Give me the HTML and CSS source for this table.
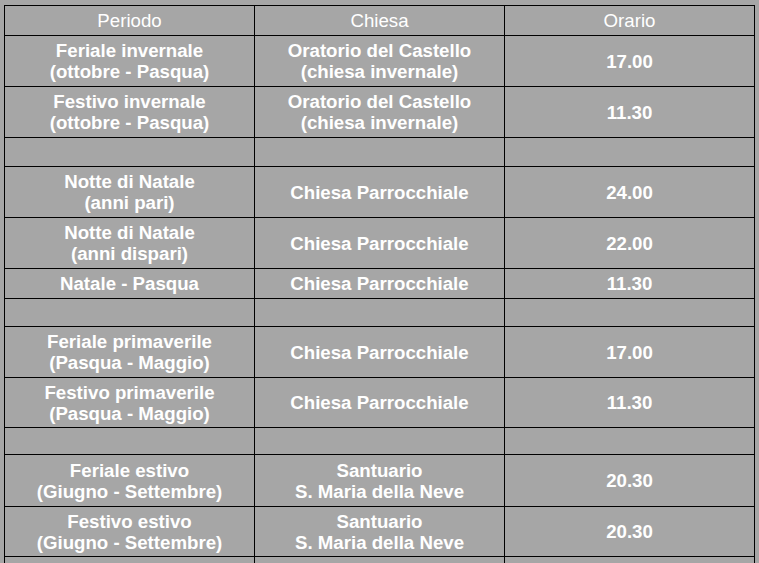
FILE: index.html
```html
<!DOCTYPE html>
<html lang="it">
<head>
<meta charset="utf-8">
<title>Orari Messe</title>
<link rel="stylesheet" href="styles.css">
</head>
<body>
<table class="orari">
  <tr class="head r30"><td>Periodo</td><td>Chiesa</td><td>Orario</td></tr>
  <tr class="r51"><td>Feriale invernale<br>(ottobre - Pasqua)</td><td>Oratorio del Castello<br>(chiesa invernale)</td><td>17.00</td></tr>
  <tr class="r51"><td>Festivo invernale<br>(ottobre - Pasqua)</td><td>Oratorio del Castello<br>(chiesa invernale)</td><td>11.30</td></tr>
  <tr class="r29"><td></td><td></td><td></td></tr>
  <tr class="r51"><td>Notte di Natale<br>(anni pari)</td><td>Chiesa Parrocchiale</td><td>24.00</td></tr>
  <tr class="r51"><td>Notte di Natale<br>(anni dispari)</td><td>Chiesa Parrocchiale</td><td>22.00</td></tr>
  <tr class="r30"><td>Natale - Pasqua</td><td>Chiesa Parrocchiale</td><td>11.30</td></tr>
  <tr class="r28"><td></td><td></td><td></td></tr>
  <tr class="r51"><td>Feriale primaverile<br>(Pasqua - Maggio)</td><td>Chiesa Parrocchiale</td><td>17.00</td></tr>
  <tr class="r50"><td>Festivo primaverile<br>(Pasqua - Maggio)</td><td>Chiesa Parrocchiale</td><td>11.30</td></tr>
  <tr class="r27"><td></td><td></td><td></td></tr>
  <tr class="r52"><td>Feriale estivo<br>(Giugno - Settembre)</td><td>Santuario<br>S. Maria della Neve</td><td>20.30</td></tr>
  <tr class="r50"><td>Festivo estivo<br>(Giugno - Settembre)</td><td>Santuario<br>S. Maria della Neve</td><td>20.30</td></tr>
  <tr class="r30"><td></td><td></td><td></td></tr>
</table>
</body>
</html>
```
FILE: styles.css
```css
html, body {
  margin: 0;
  padding: 0;
  background: #a6a6a6;
}
body {
  padding: 5px 0 0 4px;
  font-family: "Liberation Sans", Arial, sans-serif;
  color: #ffffff;
}
.orari {
  border-collapse: collapse;
  table-layout: fixed;
  width: 751px;
  font-size: 18.67px;
  line-height: 21px;
  font-weight: bold;
}
.orari td {
  border: 1px solid #000;
  padding: 0;
  text-align: center;
  vertical-align: middle;
  width: 249px;
}
.orari .head td {
  font-weight: normal;
}
.r27 { height: 27px; }
.r28 { height: 28px; }
.r29 { height: 29px; }
.r30 { height: 30px; }
.r50 { height: 50px; }
.r51 { height: 51px; }
.r52 { height: 52px; }
```
